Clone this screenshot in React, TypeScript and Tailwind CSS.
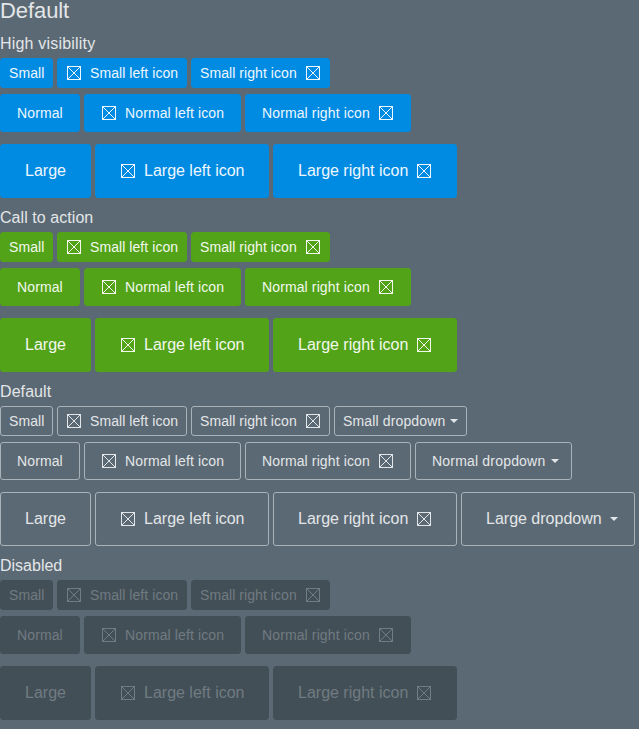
const variants = [
  { title: 'High visibility', heading: 'tracking-[0.2px]', style: 'bg-[#008be3] border-[#008be3] text-[#eef7fd]', dropdown: false },
  { title: 'Call to action', heading: 'tracking-[0.06px]', style: 'bg-[#53a318] border-[#53a318] text-[#f2f8ee]', dropdown: false },
  { title: 'Default', heading: 'tracking-[0.08px]', style: 'border-[#a9b2b8] text-[#e3e6e8]', dropdown: true },
  { title: 'Disabled', heading: 'tracking-normal', style: 'bg-[#434f56] border-[#434f56] text-[#707b82]', dropdown: false },
];

const sizes = [
  { name: 'Small', row: 'h-9', style: 'h-[30px] px-2 text-[14px]', tracking: 'tracking-[0.07px]', dropTracking: 'tracking-[0.14px]', widths: ['w-[53px]', 'w-[130px]', 'w-[139px]', 'w-[133px]'], icon: 'pl-[9px]', caret: 'pl-[5px]' },
  { name: 'Normal', row: 'h-[50px]', style: 'h-[38px] px-4 text-[14px]', tracking: 'tracking-[0.12px]', dropTracking: 'tracking-[0.19px]', widths: ['w-[80px]', 'w-[157px]', 'w-[166px]', 'w-[157px]'], icon: 'pl-[17px]', caret: 'pl-[6px]' },
  { name: 'Large', row: 'h-[54px]', style: 'h-[54px] px-6 text-[16px]', tracking: 'tracking-normal', dropTracking: 'tracking-normal', widths: ['w-[91px]', 'w-[174px]', 'w-[184px]', 'w-[174px]'], icon: 'pl-[25px]', caret: 'pl-[8px]' },
];

function BoxIcon() {
  return (
    <svg width="14" height="14" viewBox="0 0 14 14" fill="none" stroke="currentColor" className="shrink-0">
      <rect x="0.5" y="0.5" width="13" height="13" />
      <path d="M0.5 0.5L13.5 13.5M13.5 0.5L0.5 13.5" />
    </svg>
  );
}

export default function App() {
  return (
    <main className="h-[729px] w-[639px] bg-[#5b6974] font-['Liberation_Sans',Arial,sans-serif] text-[#e3e6e8]">
      <h1 className="h-[34px] text-[22px] leading-[22px] tracking-[-0.08px]">Default</h1>
      {variants.map((v) => (
        <section key={v.title} className="h-[174px]">
          <h2 className={`h-6 text-[16px] leading-5 ${v.heading}`}>{v.title}</h2>
          {sizes.map((s) => (
            <div key={s.name} className={`flex items-start gap-1 ${s.row}`}>
              <button className={`flex items-center whitespace-nowrap rounded-[3px] border ${v.style} ${s.style} ${s.tracking} ${s.widths[0]}`}>{s.name}</button>
              <button className={`flex items-center gap-[9px] whitespace-nowrap rounded-[3px] border ${v.style} ${s.style} ${s.tracking} ${s.icon} ${s.widths[1]}`}>
                <BoxIcon />{s.name} left icon
              </button>
              <button className={`flex items-center justify-between whitespace-nowrap rounded-[3px] border ${v.style} ${s.style} ${s.tracking} ${s.widths[2]}`}>
                {s.name} right icon
                <span className="pr-px"><BoxIcon /></span>
              </button>
              {v.dropdown && (
                <button className={`flex items-center whitespace-nowrap rounded-[3px] border ${v.style} ${s.style} ${s.dropTracking} ${s.widths[3]}`}>
                  {s.name} dropdown
                  <span className={s.caret}>
                    <svg width="8" height="4" viewBox="0 0 8 4" fill="currentColor"><path d="M0 0H8L4 4Z" /></svg>
                  </span>
                </button>
              )}
            </div>
          ))}
        </section>
      ))}
    </main>
  );
}
